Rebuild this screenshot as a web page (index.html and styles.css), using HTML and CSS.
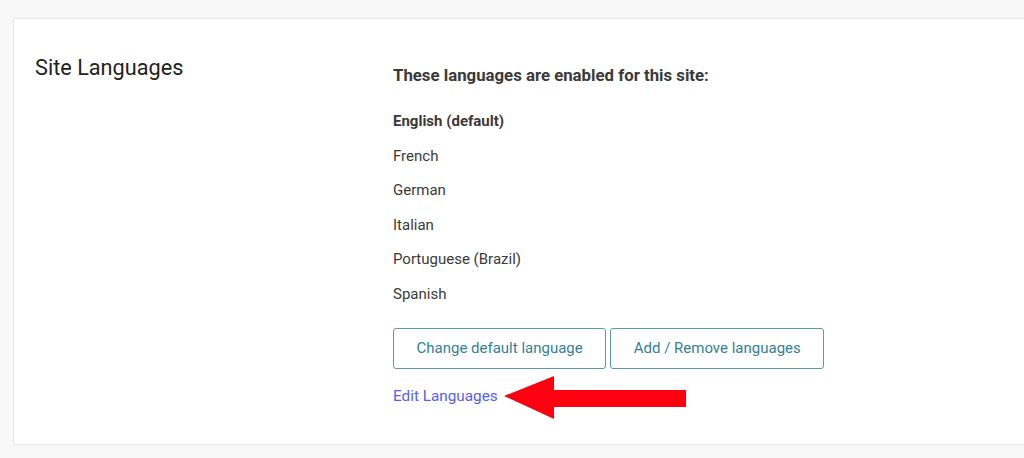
FILE: index.html
```html
<!DOCTYPE html>
<html lang="en">
<head>
    <meta charset="UTF-8">
    <title>Site Languages</title>
    <link rel="stylesheet" href="styles.css">
</head>
<body>
    <div class="card">
        <div class="card-title">
            <h2>Site Languages</h2>
        </div>
        <div class="card-body">
            <p class="intro">These languages are enabled for this site:</p>
            <ul class="lang-list">
                <li class="default">English (default)</li>
                <li>French</li>
                <li>German</li>
                <li>Italian</li>
                <li>Portuguese (Brazil)</li>
                <li>Spanish</li>
            </ul>
            <div class="actions">
                <button type="button" class="btn">Change default language</button>
                <button type="button" class="btn">Add / Remove languages</button>
            </div>
            <div class="edit-row">
                <a class="edit-link">Edit Languages</a>
                <!-- annotation arrow -->
                <svg class="arrow" width="184" height="44" viewBox="0 0 184 44">
                    <polygon points="0,20 50,0 50,14 182,14 182,31 50,31 50,43" fill="#ff0010"/>
                </svg>
            </div>
        </div>
    </div>
</body>
</html>
```

FILE: styles.css
```css
body {
    margin: 0;
    padding: 0;
    background: #f8f8f8;
    font-family: Roboto, "Liberation Sans", sans-serif;
    color: #3a3a3a;
}
.card {
    display: flex;
    margin: 18px 0 0 13px;
    padding: 35px 0 38px 21px;
    background: #fff;
    border: 1px solid #e8e8e8;
    border-right: none;
}
.card-title {
    width: 358px;
    flex-shrink: 0;
}
.card-title h2 {
    margin: 0;
    font-size: 21.7px;
    line-height: 27px;
    font-weight: 400;
    color: #222;
}
.card-body {
    margin-top: 11px;
    font-size: 15px;
    line-height: 20px;
}
.intro {
    margin: 0 0 26px;
    font-size: 16.8px;
    font-weight: 700;
}
.lang-list {
    list-style: none;
    margin: 0;
    padding: 0;
}
.lang-list li {
    margin-bottom: 14.6px;
}
.lang-list .default {
    font-weight: 700;
}
.actions {
    display: flex;
    gap: 4px;
    margin-top: 24px;
}
.btn {
    height: 41px;
    padding: 0 22.5px;
    background: #fff;
    border: 1px solid #5a98ab;
    border-radius: 3px;
    color: #357f95;
    font-family: Roboto, "Liberation Sans", sans-serif;
    font-size: 15px;
    cursor: pointer;
}
.edit-row {
    position: relative;
    margin-top: 17px;
}
.edit-link {
    color: #5660f0;
    font-size: 15.3px;
    cursor: pointer;
}
.arrow {
    position: absolute;
    left: 111px;
    top: -10px;
}
```
